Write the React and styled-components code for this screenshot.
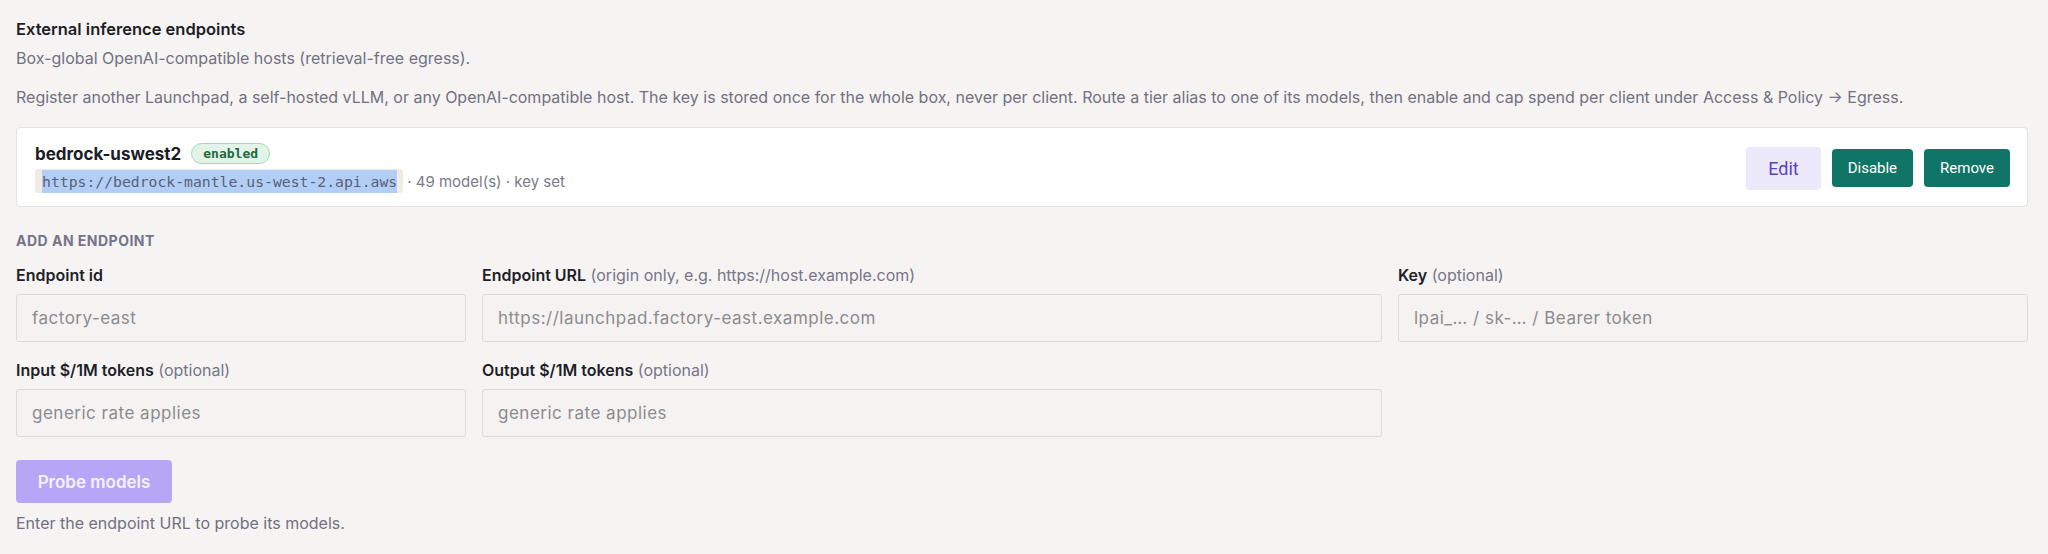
import React from "react";
import styled, { createGlobalStyle } from "styled-components";

const Global = createGlobalStyle`
  html, body { margin: 0; padding: 0; background: #f5f4f2; }
  body { font-family: Inter, "Noto Sans", sans-serif; color: #1f1f2b; }
  * { box-sizing: border-box; }
`;

const Page = styled.div`
  padding: 17px 20px 20px 16px;
  display: flex;
  flex-direction: column;
`;

const Title = styled.h2`
  margin: 0;
  font-size: 16.5px;
  line-height: 24px;
  font-weight: 600;
  color: #1d1e28;
`;

const Muted = styled.p`
  margin: ${(p) => p.$mt}px 0 0;
  font-size: 16px;
  line-height: 22px;
  color: #717182;
`;

const Card = styled.div`
  margin-top: 19px;
  background: #ffffff;
  border: 1px solid #e4e2de;
  border-radius: 4px;
  padding: 15px 17px 13px 18px;
  display: flex;
  align-items: center;
  justify-content: space-between;
`;

const CardInfo = styled.div`
  display: flex;
  flex-direction: column;
  gap: 5px;
`;

const NameRow = styled.div`
  display: flex;
  align-items: center;
  gap: 10px;
  height: 21px;
`;

const Name = styled.span`
  font-size: 17px;
  font-weight: 700;
  color: #1b1c26;
`;

const Badge = styled.span`
  display: inline-flex;
  align-items: center;
  height: 21px;
  padding: 0 11px;
  border-radius: 999px;
  background: #e2f4e7;
  border: 1px solid #a3d9b3;
  color: #1e6a3c;
  font-family: "DejaVu Sans Mono", "Liberation Mono", monospace;
  font-size: 13px;
  font-weight: 700;
`;

const MetaRow = styled.div`
  display: flex;
  align-items: center;
  font-size: 15px;
  color: #7a7a88;
`;

const Code = styled.code`
  display: inline-flex;
  align-items: center;
  background: #f1ebe5;
  padding: 0 6px 0 7px;
  border-radius: 3px;
  height: 24px;
  margin-right: 4px;
`;

const Selected = styled.span`
  background: #b3cef4;
  color: #56617c;
  font-family: "DejaVu Sans Mono", "Liberation Mono", monospace;
  font-size: 14.75px;
  line-height: 23px;
`;

const Actions = styled.div`
  display: flex;
  align-items: center;
  gap: 11px;
`;

const Btn = styled.button`
  font-family: Roboto, "Noto Sans", sans-serif;
  border: none;
  border-radius: 4px;
  cursor: pointer;
  height: ${(p) => (p.$ghost ? 43 : 38)}px;
  padding: ${(p) => (p.$ghost ? "0 22px" : "0 16px")};
  font-size: ${(p) => (p.$ghost ? 18 : 15)}px;
  background: ${(p) => (p.$ghost ? "#ece9fb" : "#107566")};
  color: ${(p) => (p.$ghost ? "#5a43c6" : "#ffffff")};
`;

const SectionLabel = styled.div`
  margin-top: 25px;
  font-size: 14px;
  line-height: 18px;
  font-weight: 700;
  color: #737389;
  letter-spacing: 0.035em;
  text-transform: uppercase;
`;

const Grid = styled.div`
  margin-top: 15px;
  display: grid;
  grid-template-columns: 1fr 2fr 1.4fr;
  column-gap: 16px;
  row-gap: 18px;
`;

const Field = styled.div`
  display: flex;
  flex-direction: column;
  gap: 9px;
`;

const Label = styled.label`
  font-size: 16px;
  line-height: 20px;
  font-weight: 600;
  color: #1e1f2a;
`;

const Hint = styled.span`
  font-weight: 400;
  color: #76768a;
`;

const Input = styled.input`
  height: 48px;
  width: 100%;
  padding: 0 15px;
  border: 1px solid #dedbd5;
  border-radius: 3px;
  background: #f4f3f1;
  font-family: Inter, "Noto Sans", sans-serif;
  font-size: 17px;
  letter-spacing: 0.5px;
  color: #1e1f2a;
  outline: none;
  &::placeholder { color: #8b8b8f; }
`;

const Probe = styled.button`
  margin-top: 23px;
  align-self: flex-start;
  width: 156px;
  height: 43px;
  border: none;
  border-radius: 4px;
  background: #b5a7f6;
  color: #f4f2ff;
  font-family: Inter, "Noto Sans", sans-serif;
  font-size: 17px;
  font-weight: 600;
`;

const fields = [
  { label: "Endpoint id", placeholder: "factory-east" },
  { label: "Endpoint URL", hint: "(origin only, e.g. https://host.example.com)", placeholder: "https://launchpad.factory-east.example.com" },
  { label: "Key", hint: "(optional)", placeholder: "lpai_… / sk-… / Bearer token" },
  { label: "Input $/1M tokens", hint: "(optional)", placeholder: "generic rate applies" },
  { label: "Output $/1M tokens", hint: "(optional)", placeholder: "generic rate applies" },
];

export default function App() {
  return (
    <>
      <Global />
      <Page>
        <Title>External inference endpoints</Title>
        <Muted $mt={6}>Box-global OpenAI-compatible hosts (retrieval-free egress).</Muted>
        <Muted $mt={17}>
          Register another Launchpad, a self-hosted vLLM, or any OpenAI-compatible host. The key is stored once for the whole box, never per client. Route a tier alias to one of its models, then enable and cap spend per client under Access &amp; Policy → Egress.
        </Muted>
        <Card>
          <CardInfo>
            <NameRow>
              <Name>bedrock-uswest2</Name>
              <Badge>enabled</Badge>
            </NameRow>
            <MetaRow>
              <Code>
                <Selected>https://bedrock-mantle.us-west-2.api.aws</Selected>
              </Code>
              · 49 model(s) · key set
            </MetaRow>
          </CardInfo>
          <Actions>
            <Btn $ghost>Edit</Btn>
            <Btn>Disable</Btn>
            <Btn>Remove</Btn>
          </Actions>
        </Card>
        <SectionLabel>Add an endpoint</SectionLabel>
        <Grid>
          {fields.map((f) => (
            <Field key={f.label}>
              <Label>
                {f.label}
                {f.hint && <Hint> {f.hint}</Hint>}
              </Label>
              <Input placeholder={f.placeholder} />
            </Field>
          ))}
        </Grid>
        <Probe>Probe models</Probe>
        <Muted $mt={9}>Enter the endpoint URL to probe its models.</Muted>
      </Page>
    </>
  );
}
